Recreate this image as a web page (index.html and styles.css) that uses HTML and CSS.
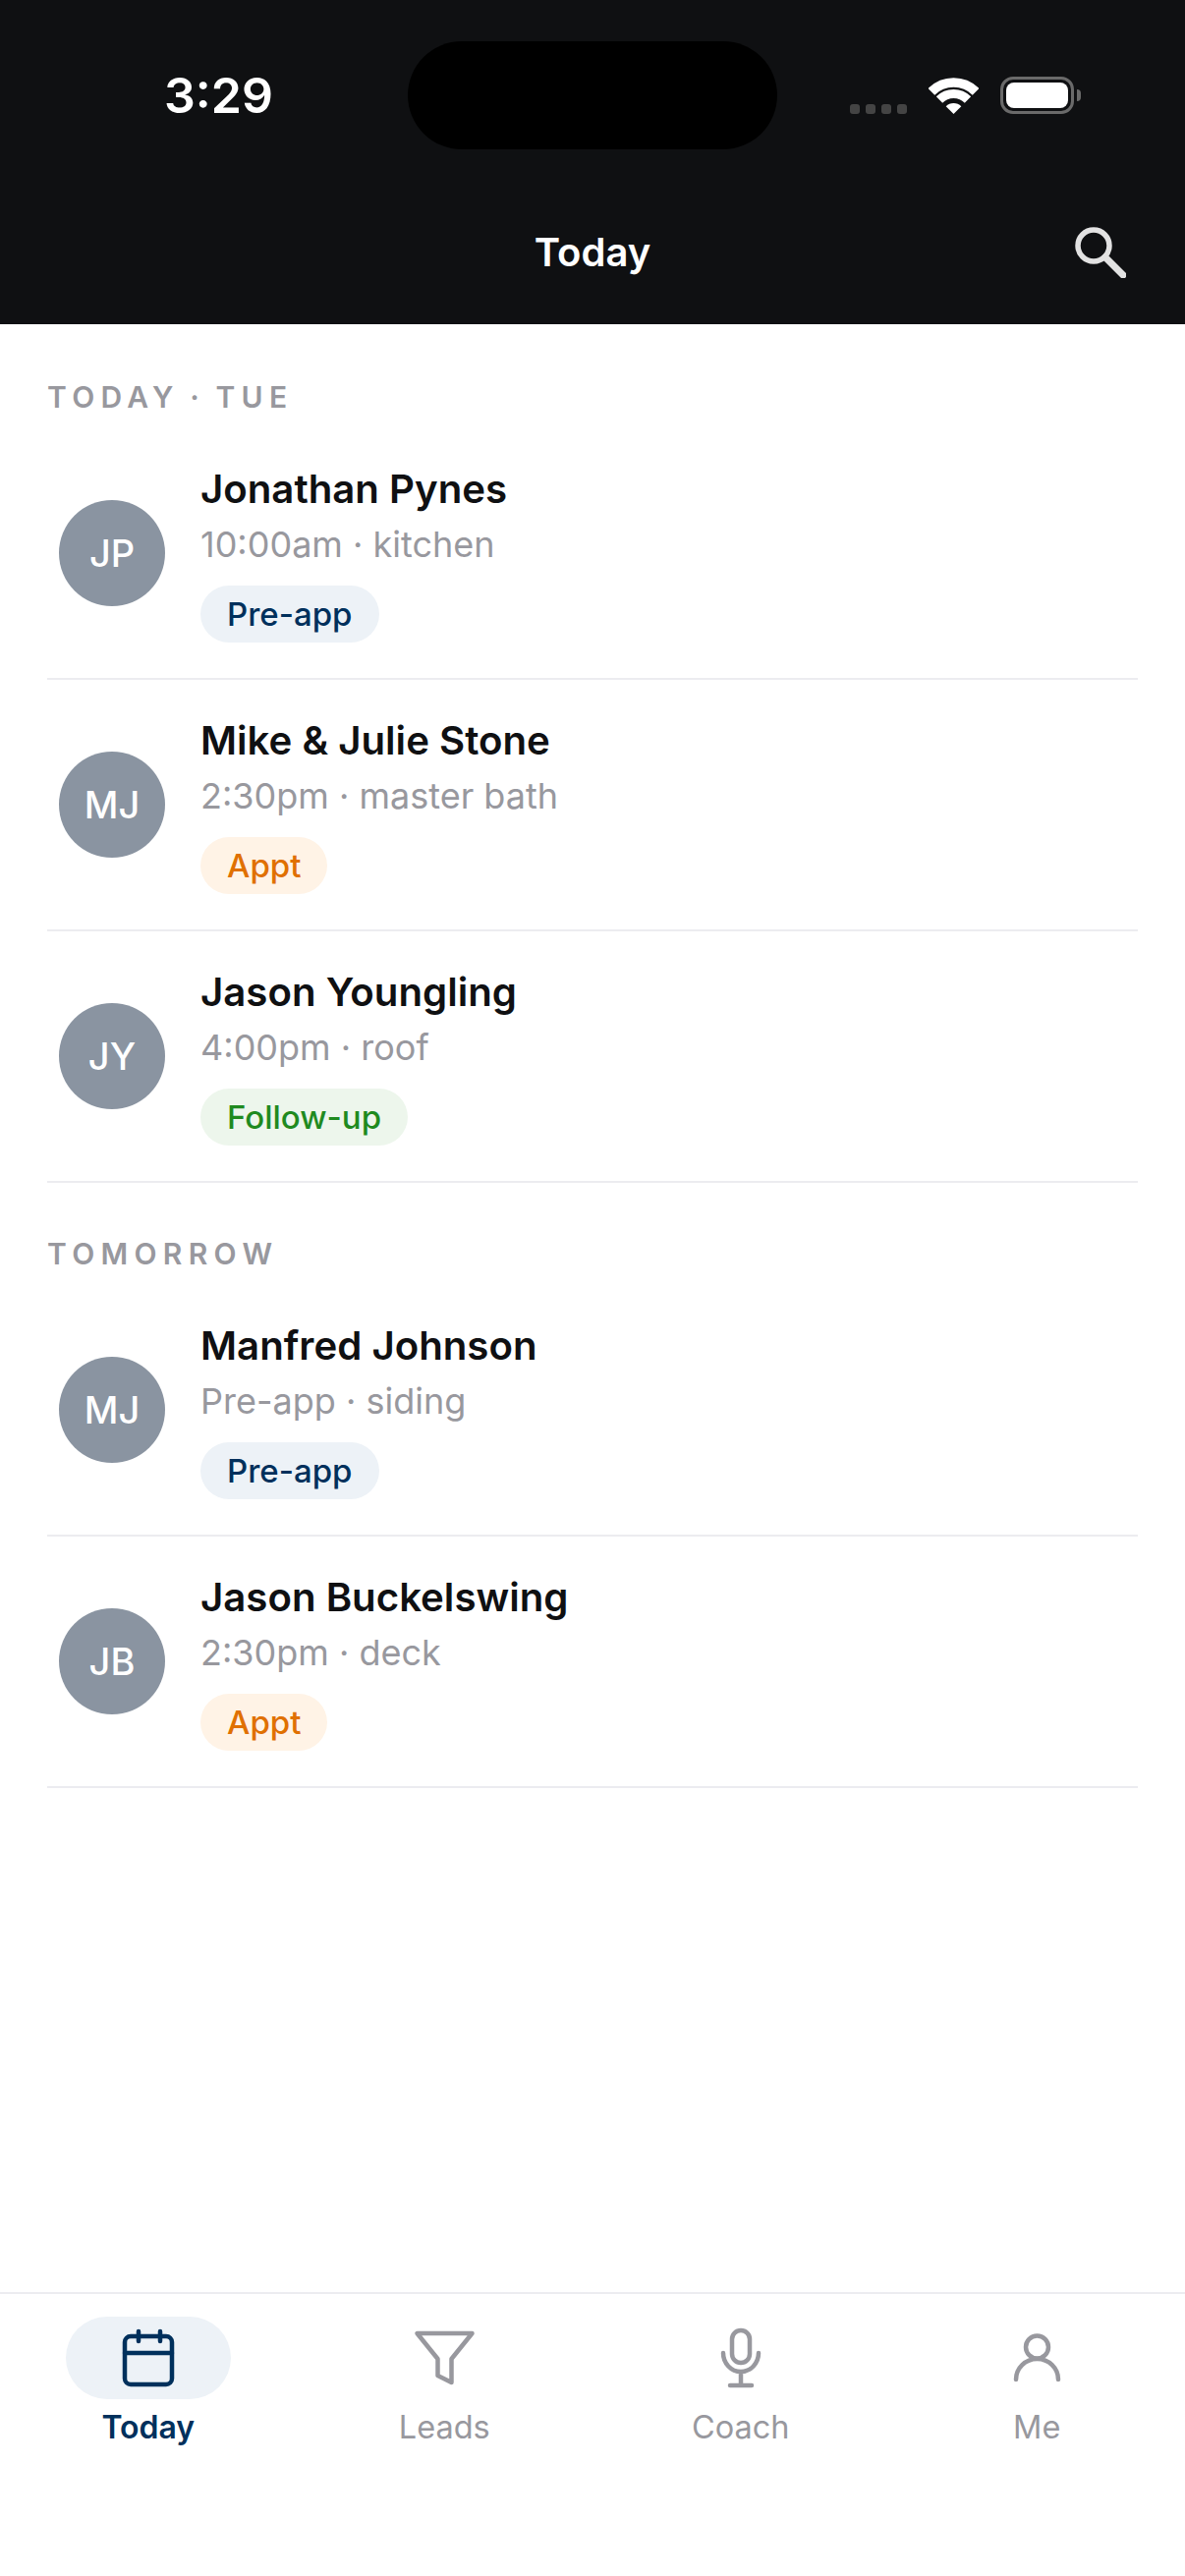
FILE: index.html
```html
<!DOCTYPE html>
<html lang="en">
<head>
    <meta charset="UTF-8">
    <title>Today</title>
    <link rel="stylesheet" href="styles.css">
</head>
<body>
<header class="top">
    <div class="status">
        <span class="time">3:29</span>
        <div class="island"></div>
        <div class="status-icons">
            <div class="dots"><i></i><i></i><i></i><i></i></div>
            <svg class="wifi" width="51" height="37" viewBox="0 0 51 37">
                <path d="M2.9 14.4A32 32 0 0 1 48.1 14.4" fill="none" stroke="#fff" stroke-width="9.5"/>
                <path d="M11 22.5A20.5 20.5 0 0 1 40 22.5" fill="none" stroke="#fff" stroke-width="9"/>
                <path d="M25.5 37L17.7 29.2A11 11 0 0 1 33.3 29.2Z" fill="#fff"/>
            </svg>
            <div class="battery"><div class="battery-fill"></div></div>
            <div class="battery-nub"></div>
        </div>
    </div>
    <div class="nav">
        <span></span>
        <h1>Today</h1>
        <svg class="search" width="52" height="52" viewBox="0 0 52 52" fill="none" stroke="#e2e2e2">
            <circle cx="19" cy="19" r="16" stroke-width="5.5"/>
            <path d="M31 31L49 49" stroke-width="7" stroke-linecap="round"/>
        </svg>
    </div>
</header>

<main class="content">
    <section>
        <h2>TODAY · TUE</h2>
        <div class="row">
            <div class="avatar">JP</div>
            <div class="info">
                <div class="name">Jonathan Pynes</div>
                <div class="meta">10:00am · kitchen</div>
                <span class="badge badge-preapp">Pre-app</span>
            </div>
        </div>
        <div class="row">
            <div class="avatar">MJ</div>
            <div class="info">
                <div class="name">Mike &amp; Julie Stone</div>
                <div class="meta">2:30pm · master bath</div>
                <span class="badge badge-appt">Appt</span>
            </div>
        </div>
        <div class="row">
            <div class="avatar">JY</div>
            <div class="info">
                <div class="name">Jason Youngling</div>
                <div class="meta">4:00pm · roof</div>
                <span class="badge badge-follow">Follow-up</span>
            </div>
        </div>
    </section>
    <section>
        <h2>TOMORROW</h2>
        <div class="row">
            <div class="avatar">MJ</div>
            <div class="info">
                <div class="name">Manfred Johnson</div>
                <div class="meta">Pre-app · siding</div>
                <span class="badge badge-preapp">Pre-app</span>
            </div>
        </div>
        <div class="row">
            <div class="avatar">JB</div>
            <div class="info">
                <div class="name">Jason Buckelswing</div>
                <div class="meta">2:30pm · deck</div>
                <span class="badge badge-appt">Appt</span>
            </div>
        </div>
    </section>
</main>

<nav class="tabs">
    <div class="tab active">
        <div class="tab-icon">
            <svg width="64" height="64" viewBox="0 0 64 64" fill="none" stroke="currentColor" stroke-width="4.5" stroke-linecap="round">
                <rect x="8" y="10" width="48" height="49" rx="6"/>
                <path d="M8 27H56M22 5V15M44 5V15"/>
            </svg>
        </div>
        <span>Today</span>
    </div>
    <div class="tab">
        <div class="tab-icon">
            <svg width="64" height="64" viewBox="0 0 64 64" fill="none" stroke="currentColor" stroke-width="4.5" stroke-linejoin="round">
                <path d="M4.5 7H60.5L39.5 33V57L25.5 50V33Z"/>
            </svg>
        </div>
        <span>Leads</span>
    </div>
    <div class="tab">
        <div class="tab-icon">
            <svg width="64" height="64" viewBox="0 0 64 64" fill="none" stroke="currentColor" stroke-width="4.5" stroke-linecap="round">
                <rect x="23" y="4" width="18" height="33" rx="9"/>
                <path d="M14 27A18 19 0 0 0 50 27M32 47V60M21 60H43"/>
            </svg>
        </div>
        <span>Coach</span>
    </div>
    <div class="tab">
        <div class="tab-icon">
            <svg width="64" height="64" viewBox="0 0 64 64" fill="none" stroke="currentColor" stroke-width="4.5" stroke-linecap="round">
                <circle cx="32.5" cy="21" r="11.5"/>
                <path d="M11 54A21.5 21 0 0 1 54 54"/>
            </svg>
        </div>
        <span>Me</span>
    </div>
</nav>
</body>
</html>
```

FILE: styles.css
```css
* {
    box-sizing: border-box;
}
body {
    font-family: Inter, "Noto Sans", sans-serif;
    display: flex;
    flex-direction: column;
    height: 2622px;
    margin: 0;
    background: #fff;
}
.top {
    height: 330px;
    background: #0f1012;
    color: #fff;
}
.status {
    display: grid;
    grid-template-columns: 415px 376px 1fr;
    align-items: center;
    padding-top: 42px;
}
.time {
    padding-left: 167px;
    font-size: 50px;
    font-weight: 600;
}
.island {
    height: 110px;
    background: #000;
    border-radius: 55px;
}
.status-icons {
    display: flex;
    align-items: flex-end;
    padding-left: 74px;
}
.dots {
    display: flex;
    gap: 6px;
    margin-right: 22px;
}
.dots i {
    width: 10px;
    height: 10px;
    border-radius: 3px;
    background: #444;
}
.wifi {
    margin-right: 22px;
}
.battery {
    width: 75px;
    height: 38px;
    padding: 3px;
    border: 3px solid #6a6a6a;
    border-radius: 13px;
}
.battery-fill {
    height: 100%;
    background: #fff;
    border-radius: 8px;
}
.battery-nub {
    align-self: center;
    width: 4px;
    height: 12px;
    margin-left: 3px;
    background: #6a6a6a;
    border-radius: 0 6px 6px 0;
}
.nav {
    display: grid;
    grid-template-columns: 1fr auto 1fr;
    align-items: center;
    margin-top: 77px;
    padding: 0 60px;
}
.nav h1 {
    margin: 0;
    font-size: 40px;
    line-height: 56px;
    font-weight: 600;
}
.search {
    justify-self: end;
}
.content {
    flex: 1;
    padding: 2px 48px 0;
}
h2 {
    margin: 0 0 12px;
    padding-top: 52px;
    font-size: 30px;
    line-height: 40px;
    font-weight: 600;
    letter-spacing: 6.3px;
    word-spacing: -3.5px;
    color: #98989e;
}
.row {
    display: flex;
    align-items: center;
    gap: 36px;
    padding: 36px 12px;
    border-bottom: 2px solid #ececf0;
}
.avatar {
    display: flex;
    flex: none;
    align-items: center;
    justify-content: center;
    width: 108px;
    height: 108px;
    background: #8a94a1;
    border-radius: 50%;
    color: #fff;
    font-size: 38px;
    font-weight: 500;
}
.info {
    display: flex;
    flex-direction: column;
    align-items: flex-start;
}
.name {
    font-size: 40.2px;
    line-height: 52px;
    font-weight: 600;
    color: #0f1012;
}
.meta {
    margin-top: 6px;
    font-size: 36px;
    line-height: 48px;
    color: #98989e;
}
.badge {
    margin-top: 18px;
    padding: 0 27px;
    font-size: 33px;
    line-height: 58px;
    font-weight: 500;
    border-radius: 29px;
}
.badge-preapp {
    background: #edf2f7;
    color: #00305c;
}
.badge-appt {
    background: #fff3e6;
    color: #e07000;
}
.badge-follow {
    background: #edf6ec;
    color: #1f8a1f;
}
.tabs {
    display: grid;
    grid-template-columns: repeat(4, 1fr);
    height: 289px;
    padding-top: 23px;
    border-top: 2px solid #ececf0;
}
.tab {
    display: flex;
    flex-direction: column;
    align-items: center;
    color: #98989e;
    font-size: 32.5px;
    line-height: 42px;
}
.tab-icon {
    display: flex;
    align-items: center;
    justify-content: center;
    width: 168px;
    height: 84px;
    margin-bottom: 8px;
    border-radius: 42px;
}
.tab.active {
    color: #00305c;
    font-size: 32px;
    font-weight: 600;
}
.tab.active .tab-icon {
    background: #edf2f7;
}
```
